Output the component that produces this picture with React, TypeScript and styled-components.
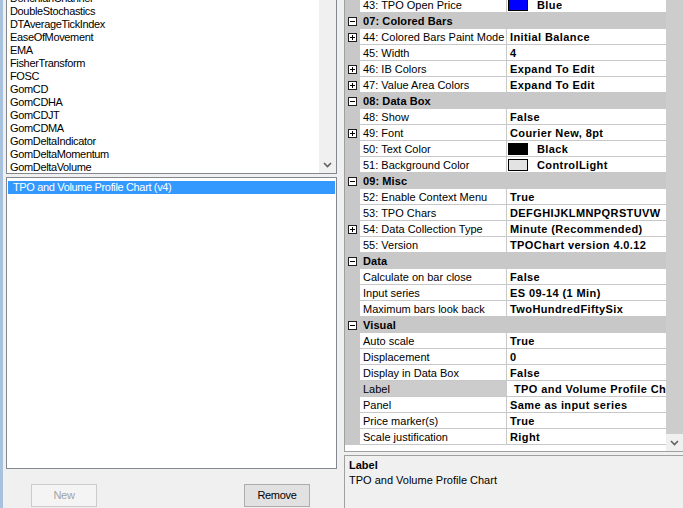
import React from "react";
import styled, { createGlobalStyle } from "styled-components";

const GlobalStyle = createGlobalStyle`
  html, body { margin: 0; padding: 0; background: #f0f0f0; }
  body {
    font-family: "Liberation Sans", Arial, sans-serif;
    font-size: 11px;
    color: #000;
  }
  * { box-sizing: border-box; }
`;

/* ---------- window frame ---------- */

const Window = styled.div`
  display: flex;
  width: 683px;
  height: 508px;
  overflow: hidden;
  background: #f0f0f0;
`;

const FrameEdge = styled.div`
  flex: none;
  width: 3px;
  background: #a8c2de;
`;

const Splitter = styled.div`
  flex: none;
  width: 7px;
`;

/* ---------- left: indicator lists ---------- */

const LeftPane = styled.div`
  flex: none;
  width: 334px;
  padding-left: 3px;
  display: flex;
  flex-direction: column;
`;

const IndicatorList = styled.div`
  flex: none;
  height: 174px;
  display: flex;
  overflow: hidden;
  background: #fff;
  border: 1px solid #828790;
  border-top: none;
`;

const ListItems = styled.div<{ $offset?: number }>`
  flex: 1;
  min-width: 0;
  padding-left: 3px;
  margin-top: ${(p) => p.$offset ?? 0}px;
`;

const ListItem = styled.div<{ $selected?: boolean }>`
  height: 13px;
  line-height: 13px;
  white-space: nowrap;
  letter-spacing: -0.35px;
  padding-left: ${(p) => (p.$selected ? 5 : 0)}px;
  background: ${(p) => (p.$selected ? "#3399ff" : "transparent")};
  color: ${(p) => (p.$selected ? "#fff" : "#000")};
`;

const ScrollTrack = styled.div`
  flex: none;
  width: 17px;
  display: flex;
  flex-direction: column;
  background: #f0f0f0;
`;

const ScrollThumb = styled.div`
  flex: 1;
  background: #cdcdcd;
`;

const ScrollSpace = styled.div`
  flex: 1;
`;

const ScrollArrow = styled.div`
  flex: none;
  height: 17px;
  display: flex;
  align-items: center;
  justify-content: center;
`;

const AppliedList = styled.div`
  flex: none;
  height: 292px;
  margin-top: 3px;
  padding: 3px 1px 0 1px;
  background: #fff;
  border: 1px solid #828790;
`;

const ButtonRow = styled.div`
  display: flex;
  justify-content: space-between;
  padding: 15px 27px 0 25px;
`;

const PushButton = styled.button<{ $disabled?: boolean }>`
  width: 66px;
  height: 23px;
  padding: 0 0 1px;
  font-family: "Liberation Sans", Arial, sans-serif;
  font-size: 11px;
  letter-spacing: -0.3px;
  border: 1px solid ${(p) => (p.$disabled ? "#cccccc" : "#adadad")};
  background: ${(p) => (p.$disabled ? "#f4f4f4" : "#e1e1e1")};
  color: ${(p) => (p.$disabled ? "#a3a3a3" : "#000")};
`;

/* ---------- right: property grid ---------- */

const RightPane = styled.div`
  flex: none;
  width: 339px;
  display: flex;
  flex-direction: column;
`;

const Grid = styled.div`
  flex: none;
  height: 452px;
  display: flex;
  border-left: 1px solid #a0a0a0;
  border-bottom: 1px solid #a0a0a0;
`;

const GridBody = styled.div`
  flex: 1;
  min-width: 0;
  overflow: hidden;
  background: #fff;
`;

const GridRows = styled.div`
  margin-top: -3px;
`;

const Row = styled.div`
  display: grid;
  grid-template-columns: 15px 147px 1fr;
  height: 16px;
`;

const CategoryRow = styled.div`
  display: grid;
  grid-template-columns: 15px 1fr;
  height: 16px;
  background: #c8c8c8;
`;

const MarginCell = styled.div`
  display: flex;
  justify-content: center;
  padding-top: 4px;
  background: #c8c8c8;
`;

const CategoryTitle = styled.div`
  padding: 1px 0 0 3px;
  line-height: 15px;
  font-weight: bold;
  letter-spacing: 0.1px;
  white-space: nowrap;
`;

const LabelCell = styled.div<{ $selected?: boolean }>`
  padding: 1px 0 0 3px;
  line-height: 14px;
  white-space: nowrap;
  overflow: hidden;
  background: ${(p) => (p.$selected ? "#cccccc" : "#fff")};
  border-bottom: 1px solid #c8c8c8;
  border-right: 1px solid #c8c8c8;
`;

const ValueCell = styled.div<{ $indent: number }>`
  display: flex;
  align-items: center;
  padding-top: 1px;
  padding-left: ${(p) => p.$indent}px;
  height: 16px;
  white-space: nowrap;
  overflow: hidden;
  font-weight: bold;
  letter-spacing: 0.4px;
  background: #fff;
  border-bottom: 1px solid #c8c8c8;
`;

const Swatch = styled.span<{ $color: string }>`
  flex: none;
  width: 20px;
  height: 12px;
  margin-right: 9px;
  background: ${(p) => p.$color};
  border: 1px solid #000;
`;

const Description = styled.div`
  flex: 1;
  margin-top: 3px;
  padding: 2px 0 0 4px;
  line-height: 15px;
  border-top: 1px solid #a0a0a0;
  border-left: 1px solid #a0a0a0;
`;

const DescriptionTitle = styled.div`
  font-weight: bold;
`;

/* ---------- glyphs ---------- */

const Chevron = () => (
  <svg width="9" height="6" viewBox="0 0 9 6">
    <path d="M1 1 L4.5 4.5 L8 1" fill="none" stroke="#606060" strokeWidth="1.6" />
  </svg>
);

const ToggleBox = ({ open }: { open: boolean }) => (
  <svg width="9" height="9" viewBox="0 0 9 9">
    <rect x="0.5" y="0.5" width="8" height="8" fill="#fff" stroke="#1e1e1e" />
    <path d="M2 4.5 H7" stroke="#000" />
    {!open && <path d="M4.5 2 V7" stroke="#000" />}
  </svg>
);

/* ---------- data ---------- */

const indicators = [
  "DonchianChannel",
  "DoubleStochastics",
  "DTAverageTickIndex",
  "EaseOfMovement",
  "EMA",
  "FisherTransform",
  "FOSC",
  "GomCD",
  "GomCDHA",
  "GomCDJT",
  "GomCDMA",
  "GomDeltaIndicator",
  "GomDeltaMomentum",
  "GomDeltaVolume",
];

type Prop = {
  label: string;
  value: string;
  expandable?: boolean;
  swatch?: string;
  selected?: boolean;
};

type Section = { title?: string; props: Prop[] };

const sections: Section[] = [
  { props: [{ label: "43: TPO Open Price", value: "Blue", swatch: "#0000ff" }] },
  {
    title: "07: Colored Bars",
    props: [
      { label: "44: Colored Bars Paint Mode", value: "Initial Balance", expandable: true },
      { label: "45: Width", value: "4" },
      { label: "46: IB Colors", value: "Expand To Edit", expandable: true },
      { label: "47: Value Area Colors", value: "Expand To Edit", expandable: true },
    ],
  },
  {
    title: "08: Data Box",
    props: [
      { label: "48: Show", value: "False" },
      { label: "49: Font", value: "Courier New, 8pt", expandable: true },
      { label: "50: Text Color", value: "Black", swatch: "#000000" },
      { label: "51: Background Color", value: "ControlLight", swatch: "#e3e3e3" },
    ],
  },
  {
    title: "09: Misc",
    props: [
      { label: "52: Enable Context Menu", value: "True" },
      { label: "53: TPO Chars", value: "DEFGHIJKLMNPQRSTUVW" },
      { label: "54: Data Collection Type", value: "Minute (Recommended)", expandable: true },
      { label: "55: Version", value: "TPOChart version 4.0.12" },
    ],
  },
  {
    title: "Data",
    props: [
      { label: "Calculate on bar close", value: "False" },
      { label: "Input series", value: "ES 09-14 (1 Min)" },
      { label: "Maximum bars look back", value: "TwoHundredFiftySix" },
    ],
  },
  {
    title: "Visual",
    props: [
      { label: "Auto scale", value: "True" },
      { label: "Displacement", value: "0" },
      { label: "Display in Data Box", value: "False" },
      { label: "Label", value: "TPO and Volume Profile Chart", selected: true },
      { label: "Panel", value: "Same as input series" },
      { label: "Price marker(s)", value: "True" },
      { label: "Scale justification", value: "Right" },
    ],
  },
];

const valueIndent = (p: Prop) => (p.swatch ? 1 : p.selected ? 7 : 3);

/* ---------- component ---------- */

export default function App() {
  return (
    <>
      <GlobalStyle />
      <Window>
        <FrameEdge />
        <LeftPane>
          <IndicatorList>
            <ListItems $offset={-8}>
              {indicators.map((name) => (
                <ListItem key={name}>{name}</ListItem>
              ))}
            </ListItems>
            <ScrollTrack>
              <ScrollSpace />
              <ScrollArrow>
                <Chevron />
              </ScrollArrow>
            </ScrollTrack>
          </IndicatorList>
          <AppliedList>
            <ListItem $selected>TPO and Volume Profile Chart (v4)</ListItem>
          </AppliedList>
          <ButtonRow>
            <PushButton $disabled disabled>
              New
            </PushButton>
            <PushButton>Remove</PushButton>
          </ButtonRow>
        </LeftPane>
        <Splitter />
        <RightPane>
          <Grid>
            <GridBody>
              <GridRows>
                {sections.map((section, si) => (
                  <React.Fragment key={si}>
                    {section.title && (
                      <CategoryRow>
                        <MarginCell>
                          <ToggleBox open />
                        </MarginCell>
                        <CategoryTitle>{section.title}</CategoryTitle>
                      </CategoryRow>
                    )}
                    {section.props.map((p) => (
                      <Row key={p.label}>
                        <MarginCell>{p.expandable && <ToggleBox open={false} />}</MarginCell>
                        <LabelCell $selected={p.selected}>{p.label}</LabelCell>
                        <ValueCell $indent={valueIndent(p)}>
                          {p.swatch && <Swatch $color={p.swatch} />}
                          {p.value}
                        </ValueCell>
                      </Row>
                    ))}
                  </React.Fragment>
                ))}
              </GridRows>
            </GridBody>
            <ScrollTrack>
              <ScrollThumb />
              <ScrollArrow>
                <Chevron />
              </ScrollArrow>
            </ScrollTrack>
          </Grid>
          <Description>
            <DescriptionTitle>Label</DescriptionTitle>
            <div>TPO and Volume Profile Chart</div>
          </Description>
        </RightPane>
      </Window>
    </>
  );
}
